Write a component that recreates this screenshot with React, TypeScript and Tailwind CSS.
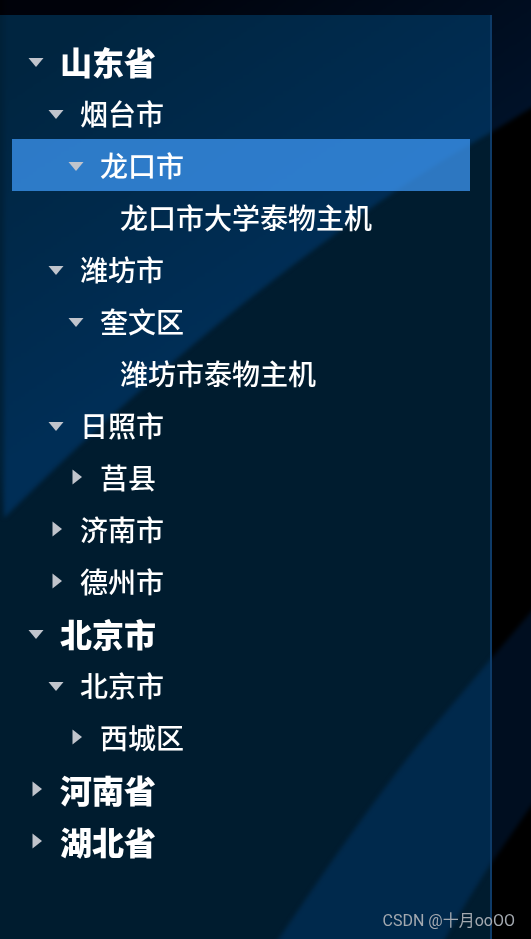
import { useState } from "react";
import clsx from "clsx";

interface Region {
  id: string;
  label: string;
  children?: Region[];
}

const regions: Region[] = [
  {
    id: "shandong",
    label: "山东省",
    children: [
      {
        id: "yantai",
        label: "烟台市",
        children: [
          {
            id: "longkou",
            label: "龙口市",
            children: [{ id: "longkou-host", label: "龙口市大学泰物主机" }],
          },
        ],
      },
      {
        id: "weifang",
        label: "潍坊市",
        children: [
          {
            id: "kuiwen",
            label: "奎文区",
            children: [{ id: "weifang-host", label: "潍坊市泰物主机" }],
          },
        ],
      },
      {
        id: "rizhao",
        label: "日照市",
        children: [{ id: "juxian", label: "莒县", children: [] }],
      },
      { id: "jinan", label: "济南市", children: [] },
      { id: "dezhou", label: "德州市", children: [] },
    ],
  },
  {
    id: "beijing",
    label: "北京市",
    children: [
      {
        id: "beijing-city",
        label: "北京市",
        children: [{ id: "xicheng", label: "西城区", children: [] }],
      },
    ],
  },
  { id: "henan", label: "河南省", children: [] },
  { id: "hubei", label: "湖北省", children: [] },
];

const initialOpen = ["shandong", "yantai", "longkou", "weifang", "kuiwen", "rizhao", "beijing", "beijing-city"];

const indents = ["pl-0", "pl-5", "pl-10", "pl-[60px]"];

interface BeamsProps {
  id: string;
  from: string;
  to: string;
  band: string;
  className?: string;
}

// Light beams crossing the page, drawn dim on the page and brighter under the glass panel
function Beams({ id, from, to, band, className }: BeamsProps) {
  return (
    <svg width="531" height="939" viewBox="0 0 531 939" aria-hidden="true" className={clsx("absolute left-0", className)}>
      <defs>
        <linearGradient id={`${id}-sky`} gradientUnits="userSpaceOnUse" x1="120" y1="0" x2="300" y2="270">
          <stop offset="0" stopColor={from} />
          <stop offset="1" stopColor={to} />
        </linearGradient>
        <filter id={`${id}-soft`} x="-5%" y="-5%" width="110%" height="110%" colorInterpolationFilters="sRGB">
          <feGaussianBlur stdDeviation="2" />
        </filter>
      </defs>
      <g filter={`url(#${id}-soft)`}>
        <path
          d="M4 -20H560V92L531 108L490 133C440 161 375 203 330 238C265 285 215 325 150 382C100 425 50 473 4 518Z"
          fill={`url(#${id}-sky)`}
        />
        <path d="M-20 -20H4V518L-20 300Z" fill={from} opacity="0.6" />
        <path d="M560 580L531 612L490 660L418 745C370 805 325 870 268 955H436C452 925 470 896 490 865L531 806L560 765Z" fill={band} />
      </g>
    </svg>
  );
}

function Caret({ open }: { open: boolean }) {
  return (
    <svg viewBox="0 0 24 24" aria-hidden="true" className="size-6 shrink-0 fill-[#c0c4cc]">
      {open ? <path d="M4.5 9H19.5L12 18Z" /> : <path d="M8.5 4.5V19.5L18 12Z" />}
    </svg>
  );
}

interface TreeNodeProps {
  node: Region;
  level: number;
  open: string[];
  selected: string;
  onSelect: (node: Region) => void;
}

function TreeNode({ node, level, open, selected, onSelect }: TreeNodeProps) {
  const isOpen = open.includes(node.id);

  return (
    <li role="treeitem" aria-expanded={node.children ? isOpen : undefined} aria-selected={selected === node.id}>
      <button
        type="button"
        onClick={() => onSelect(node)}
        className={clsx(
          "flex h-[52px] w-full cursor-pointer items-center text-left whitespace-nowrap",
          selected === node.id && "bg-[#409eff]/70"
        )}
      >
        <span className={clsx("flex items-center", indents[level])}>
          <span className="flex w-12 shrink-0 pl-3">{node.children && <Caret open={isOpen} />}</span>
          <span className={level === 0 ? "text-[32px] leading-10 font-black" : "text-[28px] leading-10 font-medium"}>
            {node.label}
          </span>
        </span>
      </button>
      {isOpen && node.children && node.children.length > 0 && (
        <ul role="group">
          {node.children.map((child) => (
            <TreeNode key={child.id} node={child} level={level + 1} open={open} selected={selected} onSelect={onSelect} />
          ))}
        </ul>
      )}
    </li>
  );
}

export default function App() {
  const [open, setOpen] = useState(initialOpen);
  const [selected, setSelected] = useState("longkou");

  const handleSelect = (node: Region) => {
    setSelected(node.id);
    if (!node.children) return;
    setOpen((prev) => (prev.includes(node.id) ? prev.filter((id) => id !== node.id) : [...prev, node.id]));
  };

  return (
    <div className="relative flex min-h-screen overflow-hidden bg-black pt-[15px] pr-[39px] font-['Noto_Sans_CJK_SC',sans-serif] text-white">
      <Beams id="page" from="#00020a" to="#001229" band="#000e20" className="top-0" />

      <aside className="relative flex-1 overflow-hidden border-r-2 border-[#0e3b68] bg-[#001c2f]">
        <Beams id="panel" from="#002540" to="#002e56" band="#00294c" className="-top-[15px]" />
        <ul role="tree" aria-label="地区" className="relative py-5 pr-5 pl-3">
          {regions.map((node) => (
            <TreeNode key={node.id} node={node} level={0} open={open} selected={selected} onSelect={handleSelect} />
          ))}
        </ul>
      </aside>

      <p className="absolute right-4 bottom-1.5 font-[Roboto,'Noto_Sans_CJK_SC',sans-serif] text-base leading-6 text-[#a3a9b0]">
        CSDN @十月ooOO
      </p>
    </div>
  );
}
